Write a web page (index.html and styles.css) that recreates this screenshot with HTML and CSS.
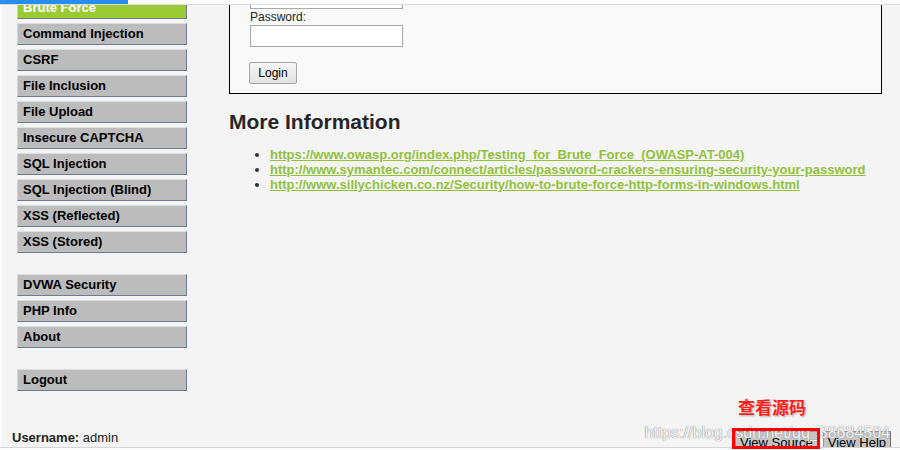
FILE: index.html
```html
<!DOCTYPE html>
<html lang="en">
<head>
<meta charset="utf-8">
<title>Vulnerability: Brute Force</title>
<link rel="stylesheet" href="styles.css">
</head>
<body>
<div class="topbar"><div class="topbar-progress"></div></div>
<div class="page">
  <div class="main">
    <nav class="sidebar">
      <ul class="menu">
        <li class="selected"><a href="#">Brute Force</a></li>
        <li><a href="#">Command Injection</a></li>
        <li><a href="#">CSRF</a></li>
        <li><a href="#">File Inclusion</a></li>
        <li><a href="#">File Upload</a></li>
        <li><a href="#">Insecure CAPTCHA</a></li>
        <li><a href="#">SQL Injection</a></li>
        <li><a href="#">SQL Injection (Blind)</a></li>
        <li><a href="#">XSS (Reflected)</a></li>
        <li><a href="#">XSS (Stored)</a></li>
      </ul>
      <ul class="menu">
        <li><a href="#">DVWA Security</a></li>
        <li><a href="#">PHP Info</a></li>
        <li><a href="#">About</a></li>
      </ul>
      <ul class="menu">
        <li><a href="#">Logout</a></li>
      </ul>
    </nav>
    <div class="content">
      <div class="vuln-box">
        <form class="login-form">
          <label class="field-label">Username:</label>
          <input class="field" type="text">
          <label class="field-label">Password:</label>
          <input class="field" type="password">
          <input class="login-btn" type="submit" value="Login">
        </form>
      </div>
      <h2 class="section-title">More Information</h2>
      <ul class="links">
        <li><a href="#">https://www.owasp.org/index.php/Testing_for_Brute_Force_(OWASP-AT-004)</a></li>
        <li><a href="#">http://www.symantec.com/connect/articles/password-crackers-ensuring-security-your-password</a></li>
        <li><a href="#">http://www.sillychicken.co.nz/Security/how-to-brute-force-http-forms-in-windows.html</a></li>
      </ul>
    </div>
  </div>
  <div class="footer">
    <div class="user-info">
      <div><b>Username:</b> admin</div>
      <div><b>Security Level:</b> impossible</div>
    </div>
    <div class="popup-buttons">
      <span class="annot-wrap">
        <span class="annot">查看源码</span>
        <button class="popup-btn">View Source</button>
        <span class="mark"></span>
      </span>
      <button class="popup-btn">View Help</button>
      <span class="watermark">https://blog.csdn.net/qq_38684504</span>
    </div>
  </div>
</div>
<div class="bottom-edge"></div>
</body>
</html>
```
FILE: styles.css
```css
html, body {
  margin: 0;
  padding: 0;
  overflow: hidden;
  height: 100%;
}
body {
  background: #f4f4f4;
  font-family: "Liberation Sans", Arial, sans-serif;
  font-size: 13px;
  color: #000;
}
.topbar {
  position: fixed;
  top: 0;
  left: 0;
  right: 0;
  height: 4px;
  background: #fdfdfd;
  border-bottom: 1px solid #dcdcdc;
  z-index: 10;
}
.topbar-progress {
  width: 128px;
  height: 4px;
  background: #2b8cf0;
}
.page {
  margin-top: -30px;
  border-left: 2px solid #fafafa;
}
.main {
  display: flex;
  align-items: flex-start;
}
.sidebar {
  flex: 0 0 227px;
  width: 227px;
  padding: 27px 0 0 15px;
  box-sizing: border-box;
}
.menu {
  list-style: none;
  margin: 0 0 21px 0;
  padding: 0;
  width: 170px;
}
.menu li {
  margin-bottom: 4px;
}
.menu li:last-child {
  margin-bottom: 0;
}
.menu a {
  display: block;
  height: 20px;
  line-height: 20px;
  padding: 0 5px;
  background: #bcbcbc;
  color: #000;
  font-weight: bold;
  font-size: 13px;
  text-decoration: none;
  border-top: 1px solid #dedede;
  border-left: 1px solid #d4d4d4;
  border-bottom: 1px solid #6e7c92;
  border-right: 1px solid #6e7c92;
}
.menu li.selected a {
  background: #9acb34;
  color: #fff;
}
.content {
  flex: 0 0 653px;
  width: 653px;
}
.vuln-box {
  background: #f8f9f8;
  border: 1px solid #000;
  padding: 0 20px 9px 20px;
}
.login-form {
  margin: 0;
}
.field-label {
  display: block;
  font-size: 12px;
  line-height: 16px;
  color: #222;
}
.field {
  display: block;
  box-sizing: border-box;
  width: 153px;
  height: 22px;
  margin: 0;
  border: 1px solid #a9a9a9;
  background: #fff;
}
.login-btn {
  display: block;
  box-sizing: border-box;
  margin: 15px 0 0 -1px;
  width: 48px;
  height: 22px;
  padding: 0;
  font-family: "Liberation Sans", Arial, sans-serif;
  font-size: 12px;
  color: #000;
  background: linear-gradient(#f6f6f6, #e2e2e2);
  border: 1px solid #a6a6a6;
  border-radius: 2px;
}
.section-title {
  margin: 16px 0 0 0;
  font-size: 21px;
  line-height: 24px;
  font-weight: bold;
  color: #262626;
}
.links {
  margin: 13px 0 0 0;
  padding-left: 41px;
  color: #333;
}
.links li {
  line-height: 15px;
}
.links a {
  color: #92c23a;
  font-weight: bold;
  font-size: 13px;
  text-decoration: underline;
}
.footer {
  display: flex;
  justify-content: space-between;
  align-items: flex-start;
  margin-top: 18px;
  padding: 0 9px 0 10px;
}
.user-info {
  line-height: 16px;
  font-size: 13px;
  color: #222;
}
.popup-buttons {
  position: relative;
  display: flex;
  gap: 5px;
  margin-top: 1px;
}
.annot-wrap {
  position: relative;
  display: flex;
}
.annot {
  position: absolute;
  left: 3px;
  top: -34px;
  white-space: nowrap;
  font-family: "Noto Sans CJK SC", sans-serif;
  font-weight: bold;
  font-size: 17px;
  line-height: 20px;
  color: #ff1a1a;
  text-shadow: 0 0 2px #fff, 1px 1px 2px #9a9a9a;
}
.mark {
  position: absolute;
  left: -3px;
  top: -3px;
  width: 82px;
  height: 15px;
  border: 3px solid #ff0000;
  z-index: 20;
  pointer-events: none;
}
.popup-btn {
  height: 22px;
  padding: 0 4px;
  font-family: "Liberation Sans", Arial, sans-serif;
  font-size: 13px;
  color: #000;
  background: #c6c6c6;
  border: 1px solid #9a9a9a;
  border-right-color: #6f6f6f;
  border-radius: 0;
}
.watermark {
  position: absolute;
  right: 1px;
  top: -7px;
  font-size: 16px;
  line-height: 18px;
  white-space: nowrap;
  color: rgba(255, 255, 255, 0.9);
  text-shadow: 0 0 1px #8c8c8c, 0 0 1px #a0a0a0;
  pointer-events: none;
}
.bottom-edge {
  position: fixed;
  left: 0;
  right: 0;
  bottom: 0;
  height: 2px;
  background: #fbfbfb;
  border-top: 1px solid #d6d6d6;
}
```
